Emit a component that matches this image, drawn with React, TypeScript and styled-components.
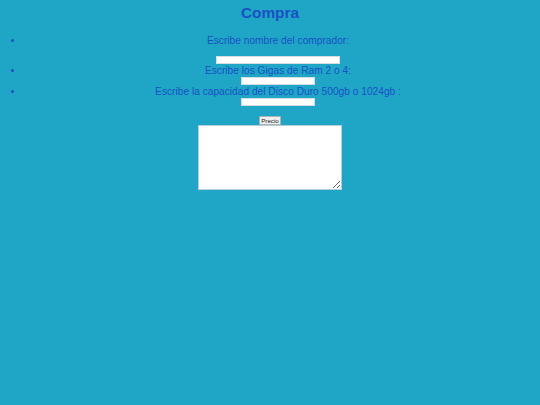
import styled, { createGlobalStyle } from 'styled-components'

const GlobalStyle = createGlobalStyle`
  html, body {
    margin: 0;
    padding: 0;
    background: #1fa6c7;
  }
  body {
    font-family: "Liberation Sans", Arial, sans-serif;
    min-height: 405px;
  }
`

const fields = [
  { label: 'Escribe nombre del comprador:', width: 124, gap: 9 },
  { label: 'Escribe los Gigas de Ram 2 o 4:', width: 74, gap: 0 },
  { label: 'Escribe la capacidad del Disco Duro 500gb o 1024gb :', width: 74, gap: 0 },
]

export default function App() {
  return (
    <>
      <GlobalStyle />
      <Page>
        <Title>Compra</Title>
        <FieldList>
          {fields.map((f) => (
            <FieldItem key={f.label}>
              <Label>{f.label}</Label>
              <TextInput type="text" $width={f.width} $gap={f.gap} />
            </FieldItem>
          ))}
        </FieldList>
        <Result>
          <PriceButton type="button">Precio</PriceButton>
          <Output />
        </Result>
      </Page>
    </>
  )
}

const Page = styled.div`
  padding: 0 8px;
`

const Title = styled.h1`
  margin: 4px 0 0;
  font-size: 15.4px;
  line-height: 18px;
  font-weight: bold;
  color: #1a50c4;
  text-align: center;
`

const FieldList = styled.ul`
  list-style: none;
  margin: 12px 0 0;
  padding: 0 0 0 16px;
`

const FieldItem = styled.li`
  position: relative;
  text-align: center;

  &::before {
    content: '';
    position: absolute;
    left: -13px;
    top: 4.5px;
    width: 3px;
    height: 3px;
    border-radius: 50%;
    background: #1a50c4;
  }
`

const Label = styled.span`
  display: block;
  font-size: 10.2px;
  line-height: 13px;
  color: #1a50c4;
`

const TextInput = styled.input<{ $width: number; $gap: number }>`
  display: block;
  box-sizing: border-box;
  width: ${(p) => p.$width}px;
  height: 8px;
  margin: ${(p) => p.$gap}px auto 0;
  padding: 0;
  border: 1px solid #d3dde2;
  background: #fff;
  font-size: 6px;
`

const Result = styled.div`
  display: flex;
  flex-direction: column;
  align-items: center;
  margin-top: 10px;
`

const PriceButton = styled.button`
  box-sizing: border-box;
  width: 22px;
  height: 9px;
  padding: 0;
  border: 1px solid #a9b4b8;
  border-radius: 1px;
  background: #efefef;
  color: #222;
  font-family: "Liberation Sans", Arial, sans-serif;
  font-size: 6.2px;
  line-height: 7px;
`

const Output = styled.textarea`
  box-sizing: border-box;
  width: 144px;
  height: 65px;
  margin: 0;
  border: 1px solid #b9cdd5;
  background: #fff;
  font-size: 6px;
`
